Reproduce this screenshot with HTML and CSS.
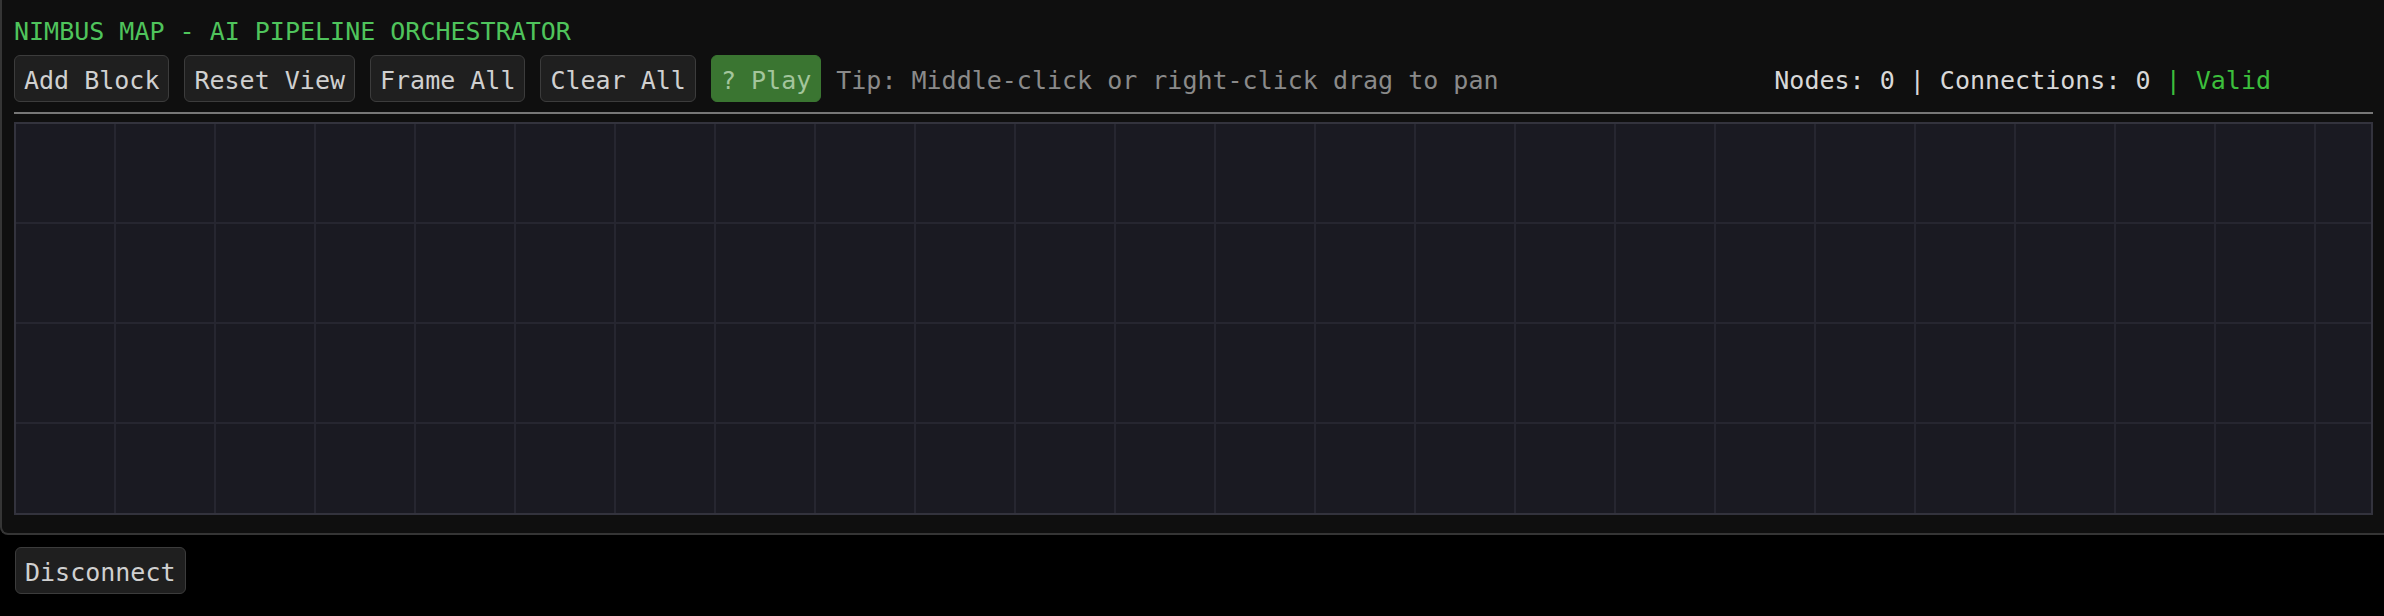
FILE: index.html
```html
<!DOCTYPE html>
<html lang="en">
<head>
<meta charset="utf-8">
<title>Nimbus Map - AI Pipeline Orchestrator</title>
<link rel="stylesheet" href="styles.css">
</head>
<body>
  <div class="window">
    <div class="title">NIMBUS MAP - AI PIPELINE ORCHESTRATOR</div>
    <div class="toolbar">
      <button class="btn">Add Block</button>
      <button class="btn">Reset View</button>
      <button class="btn">Frame All</button>
      <button class="btn">Clear All</button>
      <button class="btn btn-play">? Play</button>
      <span class="tip">Tip: Middle-click or right-click drag to pan</span>
      <span class="stats">Nodes: 0 | Connections: 0 <span class="valid">| Valid</span></span>
    </div>
    <div class="separator"></div>
    <div class="canvas"></div>
  </div>
  <div class="footer">
    <button class="btn">Disconnect</button>
  </div>
</body>
</html>
```
FILE: styles.css
```css
* { box-sizing: border-box; }

html, body {
  margin: 0;
  padding: 0;
  background: #000;
  font-family: "DejaVu Sans Mono", "Liberation Mono", monospace;
  font-size: 25px;
  color: #d6d6d6;
}

.window {
  height: 535px;
  background: #0f0f0f;
  border-left: 2px solid #353535;
  border-bottom: 2px solid #353535;
  border-bottom-left-radius: 8px;
  padding: 17px 11px 0 12px;
}

.title {
  height: 29px;
  line-height: 29px;
  color: #4fc45c;
  white-space: nowrap;
}

.toolbar {
  margin-top: 9px;
  height: 47px;
  display: flex;
  align-items: center;
  gap: 15px;
  white-space: nowrap;
}

.btn {
  height: 47px;
  padding: 4px 9px 0;
  margin: 0;
  border: 1px solid #3c3c3c;
  border-radius: 6px;
  background: #1f1f1f;
  color: #d0d0d0;
  font: inherit;
  line-height: 41px;
  white-space: nowrap;
}

.btn-play {
  background: #3a7531;
  border-color: #3a7531;
  color: #a3c59c;
}

.tip {
  padding-top: 4px;
  color: #8a8a8a;
}

.stats {
  padding-top: 4px;
  margin-left: auto;
  margin-right: 102px;
  color: #d8d8d8;
}

.valid {
  color: #3cbf3c;
}

.separator {
  margin-top: 10px;
  height: 2px;
  background: #777777;
}

.canvas {
  margin-top: 8px;
  height: 393px;
  border: 2px solid #33333d;
  background-color: #1a1a22;
  background-image:
    linear-gradient(to right, #262630 2px, transparent 2px),
    linear-gradient(to bottom, #262630 2px, transparent 2px);
  background-size: 100px 100px;
  background-position: -2px -2px;
}

.footer {
  padding: 12px 0 0 15px;
}
```
